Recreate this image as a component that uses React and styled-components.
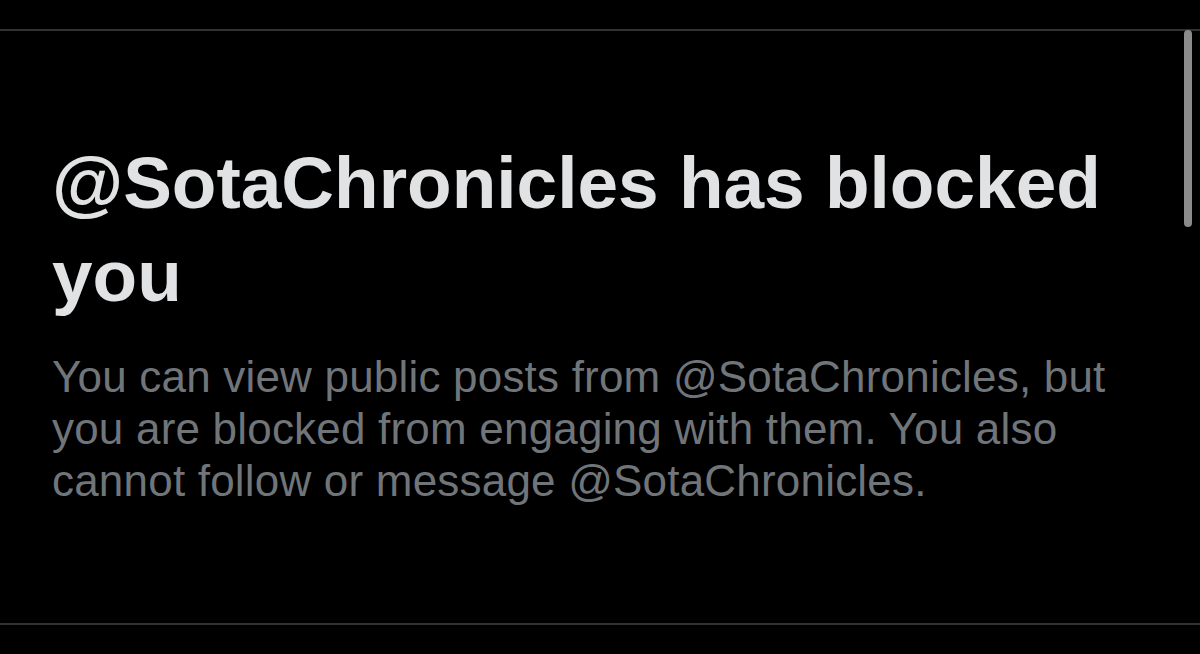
import React from 'react'
import styled, { createGlobalStyle } from 'styled-components'

const GlobalStyle = createGlobalStyle`
html, body {
    margin: 0;
    padding: 0;
    background: #000;
}
`

const Page = styled.div`
width: 1200px;
height: 654px;
background: #000;
padding-top: 29px;
box-sizing: border-box;
position: relative;
overflow: hidden;
`

const Panel = styled.section`
border-top: 2px solid #2f3336;
border-bottom: 2px solid #2f3336;
height: 596px;
box-sizing: border-box;
padding: 105px 60px 0 52px;
`

const Title = styled.h1`
margin: 0;
font-family: "Liberation Sans", Arial, sans-serif;
font-weight: 700;
font-size: 73px;
line-height: 93px;
color: #e1e2e3;
`

const Body = styled.p`
margin: 29px 0 0;
max-width: 1075px;
font-family: "Liberation Sans", Arial, sans-serif;
font-size: 44px;
line-height: 52px;
letter-spacing: 0.2px;
color: #70757a;
`

const Scrollbar = styled.div`
position: absolute;
top: 30px;
right: 8px;
width: 8px;
height: 197px;
border-radius: 4px;
background: #8b8b8b;
`

export default function App() {
    return (
        <>
            <GlobalStyle />
            <Page>
                <Panel>
                    <Title>@SotaChronicles has blocked you</Title>
                    <Body>
                        You can view public posts from @SotaChronicles, but you are blocked from engaging with them. You also cannot follow or message @SotaChronicles.
                    </Body>
                </Panel>
                <Scrollbar />
            </Page>
        </>
    )
}
